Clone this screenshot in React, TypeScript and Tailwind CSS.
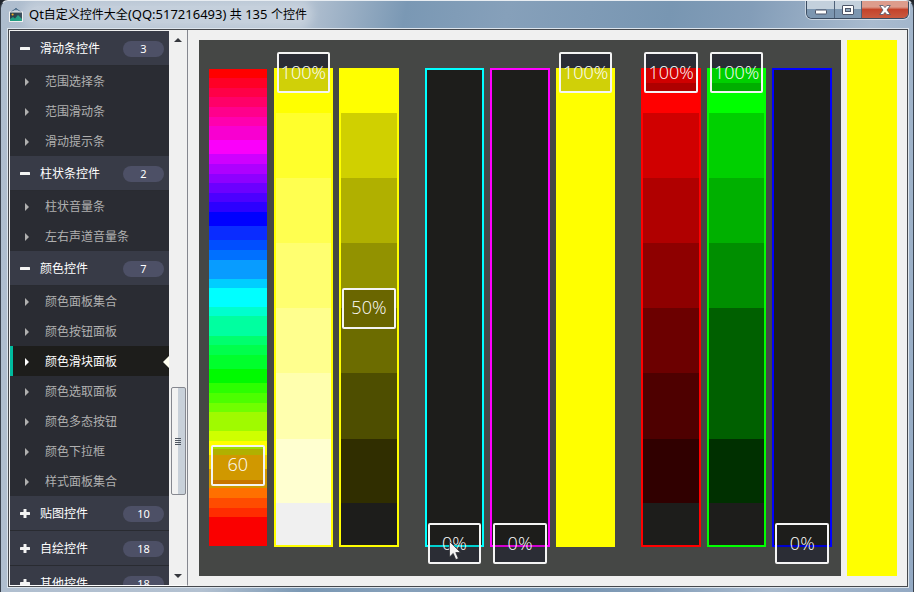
import { useState } from 'react';
import type { ReactNode } from 'react';

type Segment = [number, string];

interface SliderSpec {
    label: string;
    value: number;
    max?: number;
    unit?: string;
    frame: string;
    segments: Segment[];
    // what shows through the handle, top to bottom
    swatch: Segment[];
    pointer?: boolean;
}

const DARK = '#1d1d1b';
const HANDLE_BG = '#2b2d35';

// Height shares of the shaded bars
const STEPS = [43, 65, 65, 65, 65, 66, 64, 42];
const shades = (colors: string[]): Segment[] => colors.map((c, i) => [STEPS[i], c]);

const HUES: Segment[] = [
    [9, '#ff0000'], [10, '#ff0026'], [9, '#ff0047'], [10, '#ff0068'], [10, '#ff008c'],
    [9, '#ff00ae'], [14, '#f800d0'], [14, '#fa00fa'], [10, '#cf00ff'], [10, '#ae00ff'],
    [9, '#8e00ff'], [10, '#6c00ff'], [9, '#4c00ff'], [10, '#2c00ff'], [14, '#0000ff'],
    [14, '#0a2cff'], [10, '#004eff'], [10, '#0070ff'], [19, '#089cff'], [9, '#00ceff'],
    [19, '#00ffff'], [9, '#00ffce'], [20, '#00ffa0'], [9, '#00ff6e'], [10, '#00ff4c'],
    [14, '#00ff2c'], [14, '#00fa00'], [10, '#2cff00'], [10, '#4cff00'], [9, '#70ff00'],
    [19, '#a0fa00'], [10, '#ceff00'], [14, '#ffff00'], [14, '#f5d000'], [19, '#d09800'],
    [10, '#ff7000'], [10, '#ff4c00'], [9, '#ff2c00'], [29, '#fa0000'],
];

const topSwatch = (a: string, b: string): Segment[] => [[14, HANDLE_BG], [15, a], [8, b]];
const bottomSwatch = (line: string): Segment[] => [[20, DARK], [2, line], [15, HANDLE_BG]];

const SLIDER_GROUPS: SliderSpec[][] = [
    [
        {
            label: '色相', value: 60, max: 360, unit: '', frame: 'p-px', segments: HUES,
            swatch: [[2, '#a0e000'], [6, '#b0b000'], [25, '#d09800'], [4, '#c87400']],
        },
        {
            label: '饱和度', value: 100, frame: 'border-2 border-[#ffff00]',
            segments: shades(['#ffff00', '#ffff2c', '#ffff50', '#ffff70', '#ffff8e', '#ffffae', '#ffffd0', '#f0f0f0']),
            swatch: topSwatch('#d0d008', '#d0d008'),
        },
        {
            label: '明度', value: 50, frame: 'border-2 border-[#ffff00]',
            segments: shades(['#ffff00', '#d0d000', '#b0b000', '#929200', '#6c6c00', '#4e4e00', '#302e00', DARK]),
            swatch: [[37, '#6a6600']],
        },
    ],
    [
        { label: '青色', value: 0, frame: 'border-2 border-[#00ffff]', segments: [[1, DARK]], swatch: bottomSwatch('#00d0d0'), pointer: true },
        { label: '洋红', value: 0, frame: 'border-2 border-[#ff00ff]', segments: [[1, DARK]], swatch: bottomSwatch('#d000d0') },
        { label: '黄色', value: 100, frame: 'border-2 border-[#ffff00]', segments: [[1, '#ffff00']], swatch: topSwatch('#d0d008', '#d0d008') },
    ],
    [
        {
            label: '红色', value: 100, frame: 'border-2 border-[#ff0000]',
            segments: shades(['#ff0000', '#d00000', '#b00000', '#8e0000', '#6c0000', '#4e0000', '#300000', DARK]),
            swatch: topSwatch('#d00000', '#ae0000'),
        },
        {
            label: '绿色', value: 100, frame: 'border-2 border-[#00ff00]',
            segments: shades(['#00ff00', '#00d000', '#00b000', '#008e00', '#006000', '#006000', '#003000', DARK]),
            swatch: topSwatch('#00d000', '#00ae00'),
        },
        { label: '蓝色', value: 0, frame: 'border-2 border-[#0000ff]', segments: [[1, DARK]], swatch: bottomSwatch('#0000d0') },
    ],
];

const MENU = [
    { title: '滑动条控件', count: 3, items: ['范围选择条', '范围滑动条', '滑动提示条'] },
    { title: '柱状条控件', count: 2, items: ['柱状音量条', '左右声道音量条'] },
    {
        title: '颜色控件', count: 7,
        items: ['颜色面板集合', '颜色按钮面板', '颜色滑块面板', '颜色选取面板', '颜色多态按钮', '颜色下拉框', '样式面板集合'],
    },
    { title: '贴图控件', count: 10, items: [] },
    { title: '自绘控件', count: 18, items: [] },
    { title: '其他控件', count: 18, items: [] },
];

function Segments({ list }: { list: Segment[] }) {
    return (
        <div className="flex h-full flex-col">
            {list.map(([size, color], i) => (
                <div key={i} className="basis-0" style={{ flexGrow: size, backgroundColor: color }} />
            ))}
        </div>
    );
}

function ColorSlider({ spec }: { spec: SliderSpec }) {
    const max = spec.max ?? 100;
    const [value, setValue] = useState(spec.value);
    const offset = 1 - value / max;

    return (
        <label className="relative block flex-1">
            <div className={`h-full ${spec.frame}`}>
                <Segments list={spec.segments} />
            </div>
            <div
                className="absolute inset-x-[3px] h-[41px] overflow-hidden rounded-xs border-2 border-[#f4f4f4]"
                style={{ top: `calc(${offset} * (100% - 8px) - 16px)` }}
            >
                <Segments list={spec.swatch} />
                <span className="absolute inset-0 flex items-center justify-center pb-0.5 text-lg font-light text-white">
                    {value}{spec.unit ?? '%'}
                </span>
            </div>
            <input
                type="range"
                aria-label={spec.label}
                min={0}
                max={max}
                value={value}
                onChange={(e) => setValue(Number(e.target.value))}
                className="absolute inset-0 h-full w-full opacity-0 [direction:rtl] [writing-mode:vertical-lr]"
            />
            {spec.pointer && (
                <svg className="pointer-events-none absolute bottom-[-14px] left-6 h-5 w-3" viewBox="0 0 12 20">
                    <path d="M.5 .5v15.5l3.7-3.6 2.6 6.2 2.6-1.1-2.6-6h4.8z" fill="#f4f4f4" stroke="#26282e" strokeWidth=".7" />
                </svg>
            )}
        </label>
    );
}

function Sidebar() {
    const [active, setActive] = useState('颜色滑块面板');

    return (
        <aside className="flex w-[179px] shrink-0 border-r border-b border-[#85878f] border-b-white pt-px pl-px">
            <nav className="min-h-0 flex-1 overflow-hidden bg-[#2a2c33]">
                {MENU.map((group) => (
                    <section key={group.title}>
                        <button className="flex h-[35px] w-full items-center border-b border-[#292b31] bg-[#383b47] pt-0.5 pr-[5px] pl-2.5 text-left text-white">
                            <svg className="mr-2.5 h-2.5 w-2.5" viewBox="0 0 10 10" fill="#f4f4f4">
                                <rect x="0" y="3" width="10" height="3" rx=".5" />
                                {group.items.length === 0 && <rect x="3.5" y="0" width="3" height="9" rx=".5" />}
                            </svg>
                            <span className="flex-1">{group.title}</span>
                            <span className="flex h-4 w-[41px] items-center justify-center rounded-full bg-[#4d5066] text-[11px]">
                                {group.count}
                            </span>
                        </button>
                        {group.items.map((item) => {
                            const isActive = item === active;
                            return (
                                <a
                                    key={item}
                                    href="#"
                                    onClick={() => setActive(item)}
                                    className={`flex h-[30px] items-center border-l-[3px] pt-0.5 pl-3 ${
                                        isActive ? 'border-[#00bb9e] bg-[#1d1d1b] text-white' : 'border-transparent text-[#b0b0b0]'
                                    }`}
                                >
                                    <svg className="mr-4 h-2 w-1" viewBox="0 0 4 8" fill="currentColor">
                                        <path d="M0 0l4 4-4 4z" />
                                    </svg>
                                    <span className="flex-1">{item}</span>
                                    {isActive && (
                                        <svg className="h-3 w-1.5" viewBox="0 0 6 12" fill="#fffff0">
                                            <path d="M6 0L0 6l6 6z" />
                                        </svg>
                                    )}
                                </a>
                            );
                        })}
                    </section>
                ))}
            </nav>
            <div className="flex w-[18px] flex-col items-center bg-[#f0f0f0]">
                <button aria-label="向上" className="flex h-[18px] w-full items-center justify-center">
                    <svg className="h-1 w-2" viewBox="0 0 8 4" fill="#35373d"><path d="M0 4l4-4 4 4z" /></svg>
                </button>
                <div className="flex flex-1 flex-col items-center">
                    <div className="grow-[344] basis-0" />
                    <div className="flex w-[15px] grow-[108] basis-0 flex-col items-center justify-center gap-px rounded-xs border border-[#85878f] bg-linear-to-r from-[#f2f2f2] from-45% to-[#c8d0d9] to-50%">
                        {[0, 1, 2, 3].map((n) => (
                            <i key={n} className="h-px w-1.5 bg-[#4e5560]" />
                        ))}
                    </div>
                    <div className="grow-[73] basis-0" />
                </div>
                <button aria-label="向下" className="flex h-[18px] w-full items-center justify-center">
                    <svg className="h-1 w-2" viewBox="0 0 8 4" fill="#35373d"><path d="M0 0l4 4 4-4z" /></svg>
                </button>
            </div>
        </aside>
    );
}

function WindowButton({ label, className, children }: { label: string; className: string; children: ReactNode }) {
    return (
        <button aria-label={label} className={`flex h-[17px] items-center justify-center ${className}`}>
            {children}
        </button>
    );
}

function TitleBar() {
    return (
        <header className="flex h-[27px] shrink-0 items-start pr-1">
            <div className="flex h-[27px] items-center pl-2">
                <svg className="mr-1.5 h-3.5 w-3.5" viewBox="0 0 14 14">
                    <path d="M2 4l5-3.5L12 4" fill="none" stroke="#52708c" strokeWidth="1" />
                    <circle cx="7" cy="1" r="1" fill="#52708c" />
                    <rect x=".5" y="4" width="13" height="9.5" fill="#2d4250" stroke="#f0f0f0" />
                    <circle cx="3.6" cy="6.5" r="1.1" fill="#f4b020" />
                    <path d="M1 13v-2l3-2 2 1.5L9 7l4 4v2z" fill="#209d80" />
                </svg>
                <h1 className="rounded-full bg-white/25 text-[13px] leading-4 text-black shadow-[0_0_10px_6px_rgba(255,255,255,0.25)]">
                    Qt<span className="text-xs leading-4">自定义控件大全</span>(QQ:517216493){' '}
                    <span className="text-xs leading-4">共</span> 135 <span className="text-xs leading-4">个控件</span>
                </h1>
            </div>
            <div className="ml-auto flex overflow-hidden rounded-b-md border border-t-0 border-[#3b4c61] shadow-[0_0_0_1px_rgba(255,255,255,0.5)]">
                <WindowButton label="最小化" className="w-[27px] bg-linear-to-b from-[#c3d0dc] from-45% to-[#7c96b0] to-50%">
                    <svg className="mt-1 h-1.5 w-3" viewBox="0 0 12 6">
                        <rect x=".5" y="1" width="11" height="4" rx=".5" fill="#fff" stroke="#4c5568" />
                    </svg>
                </WindowButton>
                <WindowButton label="最大化" className="w-7 border-x border-[#4f6178] bg-linear-to-b from-[#c3d0dc] from-45% to-[#7c96b0] to-50%">
                    <svg className="h-2.5 w-3" viewBox="0 0 12 10">
                        <rect x=".5" y=".5" width="11" height="9" rx=".5" fill="#fff" stroke="#4c5568" />
                        <rect x="3.5" y="3.5" width="5" height="3" fill="#91a8bd" stroke="#4c5568" />
                    </svg>
                </WindowButton>
                <WindowButton label="关闭" className="w-[46px] bg-linear-to-b from-[#dd9c8c] from-35% via-[#c4432b] via-50% to-[#c9593f]">
                    <svg className="h-2.5 w-3" viewBox="0 0 12 10">
                        <path d="M.7.5h3.5L6 2.6 7.8.5h3.5L8 5l3.3 4.5H7.8L6 7.4 4.2 9.5H.7L4 5z" fill="#fff" stroke="#4c5568" strokeWidth=".8" />
                    </svg>
                </WindowButton>
            </div>
        </header>
    );
}

export default function App() {
    return (
        <div className="h-screen bg-[#20252c] font-['Noto_Sans','Noto_Sans_CJK_SC',sans-serif] text-xs">
            <div className="flex h-full flex-col overflow-hidden rounded-t-lg border border-b-0 border-[#39424e] border-t-[#e8edf2] bg-[linear-gradient(100deg,#aebdce_0%,#b3c1d1_30%,#7a98b4_40%,#86a0ba_50%,#7896b2_66%,#839db8_74%,#a9bbcf_86%,#93a9c3_100%)]">
                <TitleBar />
                <div className="mr-1 mb-1 ml-1.5 flex min-h-0 flex-1 border border-[#dce4ec]">
                    <div className="flex min-w-0 flex-1 border border-[#45484d] bg-[#f0f0f0]">
                        <Sidebar />
                        <main className="flex min-w-0 flex-1 gap-1.5 p-2.5 pl-[11px]">
                            <div className="flex flex-1 gap-[26px] bg-[#454745] px-[9px] pt-7 pb-[29px] font-['Open_Sans','Noto_Sans',sans-serif]">
                                {SLIDER_GROUPS.map((group, i) => (
                                    <div key={i} className="flex flex-1 gap-1.5">
                                        {group.map((spec) => (
                                            <ColorSlider key={spec.label} spec={spec} />
                                        ))}
                                    </div>
                                ))}
                            </div>
                            <div className="w-[50px] bg-[#ffff00]" />
                        </main>
                    </div>
                </div>
            </div>
        </div>
    );
}
